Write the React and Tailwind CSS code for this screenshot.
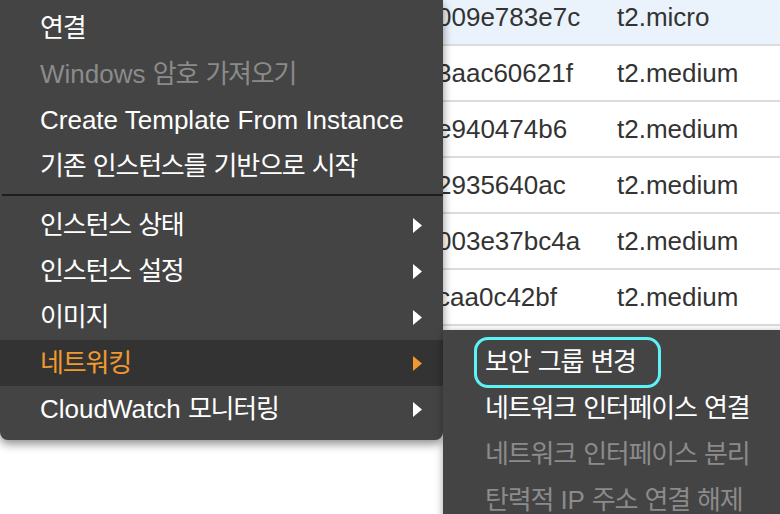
import React from "react";

const rows = [
    { id: "009e783e7c", type: "t2.micro", selected: true },
    { id: "3aac60621f", type: "t2.medium" },
    { id: "e940474b6", type: "t2.medium" },
    { id: "2935640ac", type: "t2.medium" },
    { id: "003e37bc4a", type: "t2.medium" },
    { id: "caa0c42bf", type: "t2.medium" },
];

const topItems = [
    { label: "연결" },
    { label: "Windows 암호 가져오기", disabled: true },
    { label: "Create Template From Instance" },
    { label: "기존 인스턴스를 기반으로 시작" },
];

const subItems = [
    { label: "인스턴스 상태" },
    { label: "인스턴스 설정" },
    { label: "이미지" },
    { label: "네트워킹", active: true },
    { label: "CloudWatch 모니터링" },
];

const networkItems = [
    { label: "보안 그룹 변경", marked: true },
    { label: "네트워크 인터페이스 연결" },
    { label: "네트워크 인터페이스 분리", disabled: true },
    { label: "탄력적 IP 주소 연결 해제", disabled: true },
];

// hangul runs get a tighter tracking so they match the narrower system font
const Txt = ({ children }) => (
    <span className="whitespace-pre">
        {children.split(/([\uac00-\ud7a3]+)/).map((part, i) =>
            /[\uac00-\ud7a3]/.test(part) ? (
                <span key={i} className="tracking-[-1.2px]">{part}</span>
            ) : (
                <span key={i}>{part}</span>
            )
        )}
    </span>
);

const Arrow = ({ color }) => (
    <svg width="9" height="15" viewBox="0 0 9 15" className="shrink-0">
        <polygon points="0,0 9,7.5 0,15" fill={color} />
    </svg>
);

export default function App() {
    return (
        <div className="relative w-[780px] h-[514px] overflow-hidden bg-white font-['Liberation_Sans','Noto_Sans_CJK_KR',sans-serif] text-[26px]">
            {/* instance table behind the menus */}
            <div className="-mt-[10px]">
                {rows.map((r) => (
                    <div
                        key={r.id}
                        className={`flex items-center h-[56px] border-b-2 border-[#dcdcdc] text-[#333333] ${r.selected ? "bg-[#eaf2fc]" : "bg-white"}`}
                    >
                        <div className="pl-[437px] w-[617px] shrink-0">{r.id}</div>
                        <div>{r.type}</div>
                    </div>
                ))}
            </div>

            {/* context menu */}
            <div className="absolute left-0 top-0 w-[443px] pt-[5px] pb-[8px] bg-[#444444] rounded-b-[8px] shadow-[0_4px_10px_rgba(0,0,0,0.45)] text-white">
                {topItems.map((it) => (
                    <div key={it.label} className={`h-[46px] flex items-center pl-[40px] ${it.disabled ? "text-[#8b8b8b]" : "text-white"}`}>
                        <Txt>{it.label}</Txt>
                    </div>
                ))}
                <div className="mt-[5px] mb-[6px] ml-[2px] h-[2px] bg-[#1e1e1e]" />
                {subItems.map((it) => (
                    <div
                        key={it.label}
                        className={`h-[46px] flex items-center justify-between pl-[40px] pr-[21px] ${it.active ? "bg-[#333333] text-[#f0992e]" : "text-white"}`}
                    >
                        <Txt>{it.label}</Txt>
                        <Arrow color={it.active ? "#f0992e" : "#ffffff"} />
                    </div>
                ))}
            </div>

            {/* networking submenu */}
            <div className="absolute left-[443px] top-[330px] w-[360px] h-[200px] pt-[9px] bg-[#444444] shadow-[0_2px_8px_rgba(0,0,0,0.35)]">
                {networkItems.map((it) => (
                    <div key={it.label} className={`relative h-[46px] flex items-center pl-[42px] ${it.disabled ? "text-[#8b8b8b]" : "text-white"}`}>
                        <Txt>{it.label}</Txt>
                        {it.marked && (
                            <span className="absolute left-[31px] top-[-2px] w-[187px] h-[51px] rounded-[14px] border-[3px] border-[#5ef2f6]" />
                        )}
                    </div>
                ))}
            </div>
        </div>
    );
}
